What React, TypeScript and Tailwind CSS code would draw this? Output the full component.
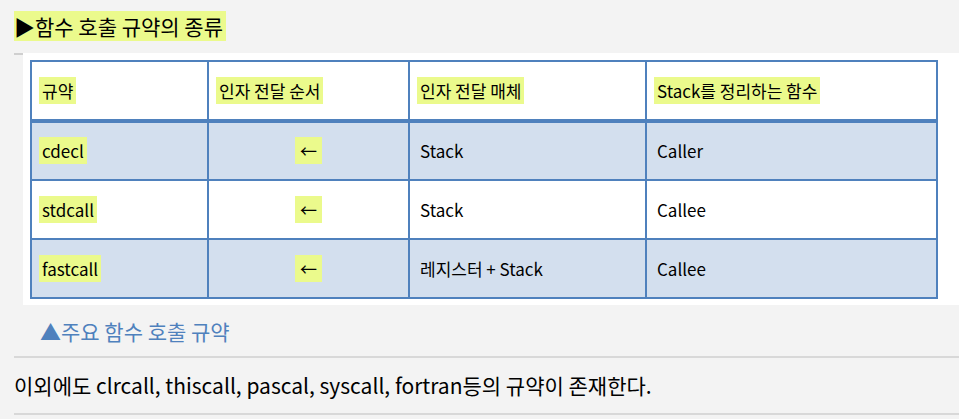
const font = { fontFamily: '"Noto Sans CJK KR", "Noto Sans", sans-serif' };

const rows = [
  { name: "cdecl", media: "Stack", cleaner: "Caller", shaded: true },
  { name: "stdcall", media: "Stack", cleaner: "Callee", shaded: false },
  { name: "fastcall", media: "레지스터 + Stack", cleaner: "Callee", shaded: true },
];

const Mark = ({ children }: { children: React.ReactNode }) => (
  <span className="bg-[#ebfa8c] px-[3px] py-[1px]">{children}</span>
);

export default function App() {
  return (
    <div
      className="w-[959px] h-[419px] bg-[#f3f3f3] text-black overflow-hidden pt-[11px]"
      style={font}
    >
      <div className="pl-[14px] h-[30px]">
        <span className="bg-[#ebfa8c] text-[21px] leading-[30px] inline-block h-[30px] pr-[3px]">
          ▶함수 호출 규약의 종류
        </span>
      </div>

      {/* 표 영역 */}
      <div className="mt-[12px] ml-[14px] flex">
        <div className="w-[10px] h-[2px] bg-[#cfcfcf]" />
        <div className="flex-1 bg-white pt-[7px] pb-[6px] pl-[7px] pr-[21px]">
          <table className="border-collapse w-[908px] text-[17px]">
            <colgroup>
              <col className="w-[177px]" />
              <col className="w-[201px]" />
              <col className="w-[237px]" />
              <col />
            </colgroup>
            <thead>
              <tr className="h-[60px] border-b-[4px] border-[#4f81bd]">
                <th className="border-2 border-[#4f81bd] text-left font-normal pl-[7px]">
                  <Mark>규약</Mark>
                </th>
                <th className="border-2 border-[#4f81bd] text-left font-normal pl-[7px]">
                  <Mark>인자 전달 순서</Mark>
                </th>
                <th className="border-2 border-[#4f81bd] text-left font-normal pl-[7px]">
                  <Mark>인자 전달 매체</Mark>
                </th>
                <th className="border-2 border-[#4f81bd] text-left font-normal pl-[7px]">
                  <Mark>Stack를 정리하는 함수</Mark>
                </th>
              </tr>
            </thead>
            <tbody>
              {rows.map((r) => (
                <tr
                  key={r.name}
                  className={`h-[59px] ${r.shaded ? "bg-[#d3dfee]" : "bg-white"}`}
                >
                  <td className="border-2 border-[#4f81bd] pl-[7px]">
                    <Mark>{r.name}</Mark>
                  </td>
                  <td className="border-2 border-[#4f81bd] text-center">
                    <Mark>
                      <span className="inline-block px-[2px]">←</span>
                    </Mark>
                  </td>
                  <td className="border-2 border-[#4f81bd] pl-[10px]">{r.media}</td>
                  <td className="border-2 border-[#4f81bd] pl-[10px]">{r.cleaner}</td>
                </tr>
              ))}
            </tbody>
          </table>
        </div>
      </div>

      <div className="pl-[40px] pt-[11px] h-[51px] text-[21px] text-[#4f81bd]">▲주요 함수 호출 규약</div>

      <div className="ml-[14px] border-t-2 border-[#d8d8d8] h-[57px] flex items-center text-[21px]">
        이외에도 clrcall, thiscall, pascal, syscall, fortran등의 규약이 존재한다.
      </div>
      <div className="ml-[14px] border-t-2 border-[#d8d8d8]" />
    </div>
  );
}
